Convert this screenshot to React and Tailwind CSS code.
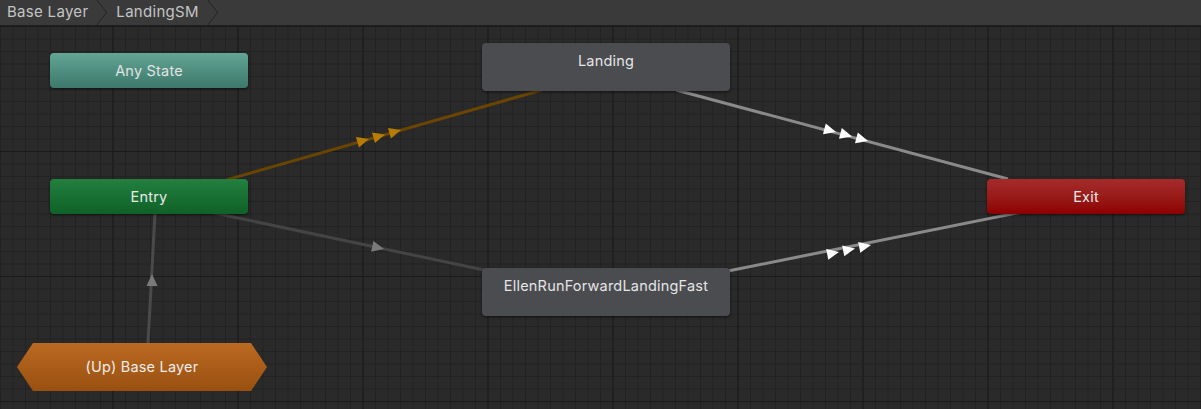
import React from "react";

const OY = 26;

function Arrow({ x, y, angle, color, len = 12, half = 5.5 }) {
  return (
    <polygon
      points={`0,0 ${-len},${-half} ${-len},${half}`}
      fill={color}
      transform={`translate(${x} ${y}) rotate(${angle})`}
    />
  );
}

function ang(x1, y1, x2, y2) {
  return (Math.atan2(y2 - y1, x2 - x1) * 180) / Math.PI;
}

function Edges() {
  const orange = ang(228, 179, 540, 91);
  const le = ang(680, 92, 1005, 178);
  const ee = ang(730, 270, 1020, 213);
  const en = ang(217, 213, 482, 270);
  return (
    <svg
      className="absolute inset-0"
      width="1201"
      height="383"
      viewBox={`0 ${OY} 1201 383`}
    >
      <defs>
        <pattern id="minor" x="0" y="1" width="12.5" height="12.5" patternUnits="userSpaceOnUse">
          <path d="M0.5 0 V12.5 M0 0.5 H12.5" stroke="#222222" strokeWidth="1" fill="none" />
        </pattern>
        <pattern id="major" x="112.5" y="26" width="125" height="125" patternUnits="userSpaceOnUse">
          <path d="M0.5 0 V125 M0 0.5 H125" stroke="#1a1a1a" strokeWidth="1" fill="none" />
        </pattern>
      </defs>
      <rect x="0" y={OY} width="1201" height="383" fill="#2a2a2a" />
      <rect x="0" y={OY} width="1201" height="383" fill="url(#minor)" />
      <rect x="0" y={OY} width="1201" height="383" fill="url(#major)" />

      {/* Up -> Entry */}
      <line x1="148" y1="343" x2="155" y2="213" stroke="#4a4a4a" strokeWidth="3" />
      <Arrow x={152} y={274} angle={-90} color="#7a7a7a" />

      {/* Entry -> Ellen */}
      <line x1="205" y1="211" x2="484" y2="270" stroke="#444444" strokeWidth="3" />
      <Arrow x={384} y={249} angle={en} color="#7a7a7a" />

      {/* Entry -> Landing (orange) */}
      <line x1="226" y1="180" x2="542" y2="90" stroke="#6a4500" strokeWidth="3" />
      <Arrow x={369} y={139} angle={orange} color="#b77c00" />
      <Arrow x={385} y={134.5} angle={orange} color="#b77c00" />
      <Arrow x={401} y={130} angle={orange} color="#b77c00" />

      {/* Landing -> Exit */}
      <line x1="676" y1="90" x2="1008" y2="179" stroke="#8a8a8a" strokeWidth="3" />
      <Arrow x={836} y={132} angle={le} color="#ffffff" />
      <Arrow x={852} y={136.5} angle={le} color="#ffffff" />
      <Arrow x={868} y={141} angle={le} color="#ffffff" />

      {/* Ellen -> Exit */}
      <line x1="728" y1="271" x2="1022" y2="212" stroke="#8a8a8a" strokeWidth="3" />
      <Arrow x={839} y={252} angle={ee} color="#ffffff" />
      <Arrow x={855} y={248.5} angle={ee} color="#ffffff" />
      <Arrow x={871} y={245} angle={ee} color="#ffffff" />
    </svg>
  );
}

function Chevron() {
  return (
    <svg width="14" height="25" viewBox="0 0 14 25" className="shrink-0">
      <path d="M1 0 L11 12.5 L1 25" stroke="#252525" strokeWidth="1.2" fill="none" />
      <path d="M2.2 0 L12.2 12.5 L2.2 25" stroke="#444444" strokeWidth="0.8" fill="none" />
    </svg>
  );
}

const nodeText = "text-[14.5px] tracking-[0.2px]";

export default function App() {
  const font = { fontFamily: "Inter, 'Noto Sans', sans-serif" };
  return (
    <div className="w-[1201px] h-[409px] overflow-hidden bg-[#2a2a2a] flex flex-col" style={font}>
      <div className="h-[26px] shrink-0 bg-[#3a3a3a] border-b border-[#1f1f1f] flex items-center text-[15px] tracking-[0.3px] text-[#c4c4c4]">
        <span className="pl-[7px] pr-[8px]">Base Layer</span>
        <Chevron />
        <span className="pl-[6px] pr-[8px]">LandingSM</span>
        <Chevron />
      </div>
      <div className={`relative flex-1 ${nodeText}`}>
        <Edges />
        {/* Any State */}
        <div className="absolute left-[50px] top-[27px] w-[198px] h-[35px] rounded-[4px] bg-gradient-to-b from-[#62a695] to-[#3d786b] shadow-[0_1px_3px_rgba(0,0,0,0.6)] flex items-center justify-center text-[#e2e2e2]">
          Any State
        </div>
        {/* Entry */}
        <div className="absolute left-[50px] top-[153px] w-[198px] h-[35px] rounded-[4px] bg-gradient-to-b from-[#22803f] to-[#0f6127] shadow-[0_1px_3px_rgba(0,0,0,0.6)] flex items-center justify-center text-[#e8e8e8]">
          Entry
        </div>
        {/* Landing */}
        <div className="absolute left-[482px] top-[17px] w-[248px] h-[48px] rounded-[4px] bg-[#4a4c50] shadow-[0_1px_3px_rgba(0,0,0,0.6)] flex justify-center pt-[7px] text-[#e4e4e4]">
          Landing
        </div>
        {/* Ellen */}
        <div className="absolute left-[482px] top-[242px] w-[248px] h-[48px] rounded-[4px] bg-[#4a4c50] shadow-[0_1px_3px_rgba(0,0,0,0.6)] flex justify-center pt-[7px] text-[#e4e4e4]">
          EllenRunForwardLandingFast
        </div>
        {/* Exit */}
        <div className="absolute left-[987px] top-[153px] w-[198px] h-[35px] rounded-[4px] bg-gradient-to-b from-[#a52b2b] to-[#8c0000] shadow-[0_1px_3px_rgba(0,0,0,0.6)] flex items-center justify-center text-[#e8e8e8]">
          Exit
        </div>
        {/* (Up) Base Layer */}
        <div className="absolute left-[17px] top-[317px] w-[250px] h-[48px] bg-gradient-to-b from-[#bb6a22] to-[#99500f] [clip-path:polygon(16px_0,234px_0,250px_24px,234px_48px,16px_48px,0_24px)] flex items-center justify-center text-[#ececec]">
          (Up) Base Layer
        </div>
      </div>
    </div>
  );
}
